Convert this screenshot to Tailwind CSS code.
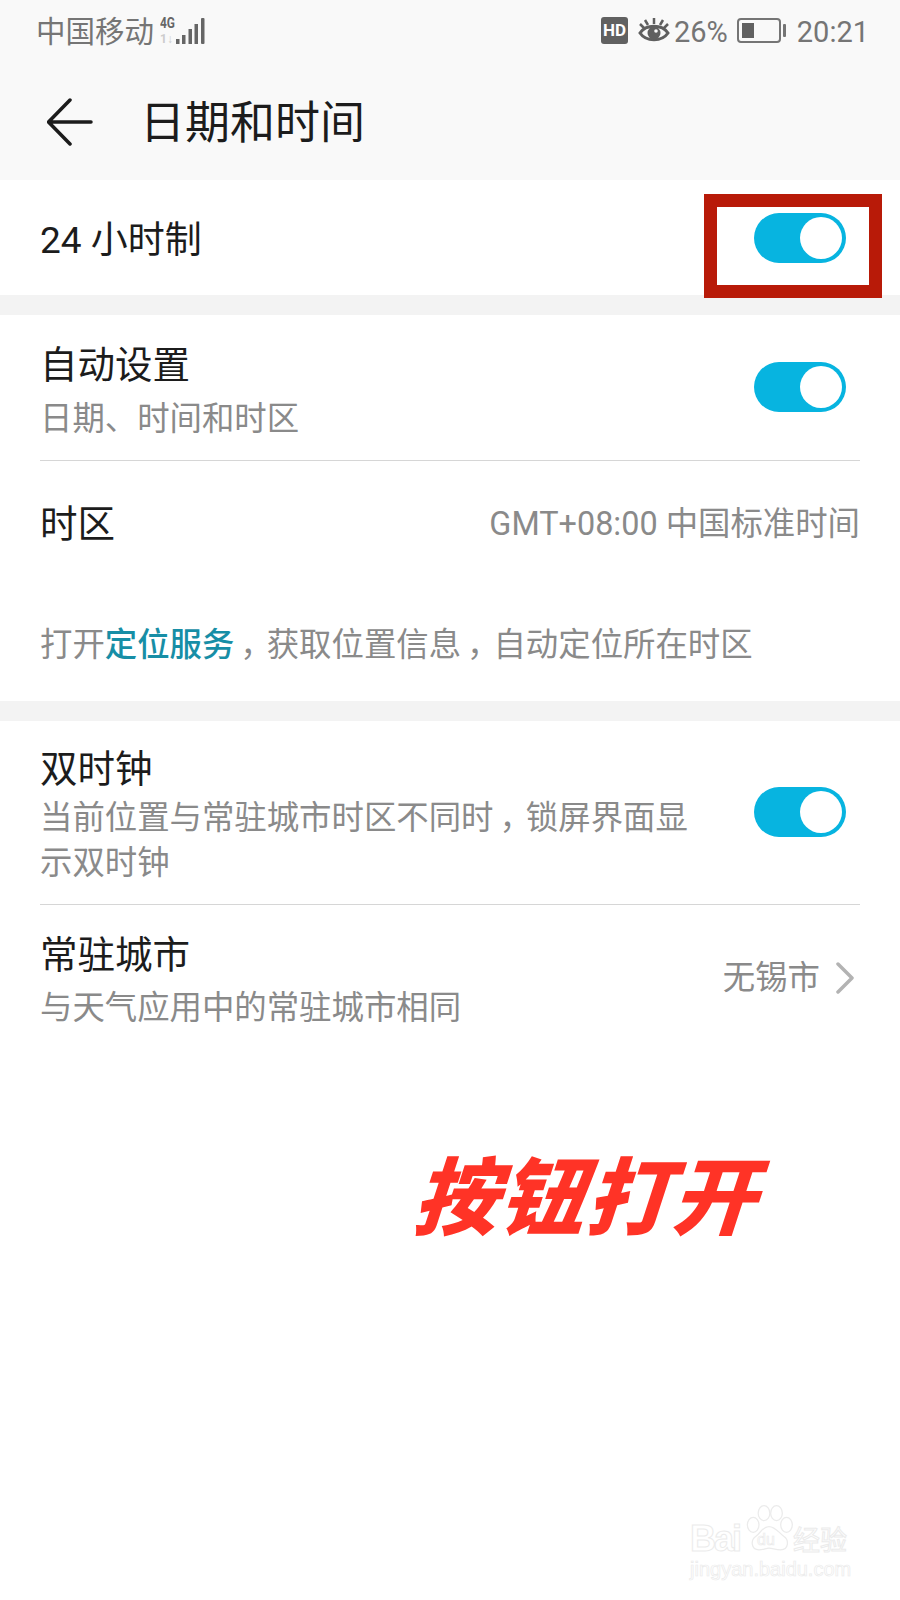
<!doctype html>
<html lang="zh"><head><meta charset="utf-8">
<script src="https://cdn.jsdelivr.net/npm/@tailwindcss/browser@4"></script>
</head>
<body class="m-0">
<div class="relative w-[900px] h-[1600px] bg-white overflow-hidden font-['Roboto','Noto_Sans_CJK_SC',sans-serif] text-[#1c1c1c]">

  <header class="h-[180px] bg-[#f9f9f9]">
    <div class="h-[60px] flex items-center justify-between pl-[36px] pr-[31px] text-[#757575] text-[29px] leading-[40px]">
      <div class="flex items-center">
        <span class="pt-[4px] text-[29.5px]">中国移动</span>
        <svg class="ml-[6px] mt-[2px]" width="46" height="30" viewBox="0 0 46 30">
          <text x="0" y="12" font-size="14" font-weight="700" fill="#666" font-family="Roboto" textLength="15" lengthAdjust="spacingAndGlyphs">4G</text>
          <text x="0" y="27" font-size="12" font-weight="700" fill="#ccc" font-family="Roboto">1↓</text>
          <g fill="#666"><rect x="16" y="23" width="3.5" height="5"/><rect x="22" y="19" width="3.5" height="9"/><rect x="28.500" y="13" width="3.500" height="15"/><rect x="34.500" y="8" width="3.500" height="20"/><rect x="41" y="2" width="3.500" height="26" rx="1"/></g>
        </svg>
      </div>
      <div class="flex items-center">
        <span class="w-[27px] h-[27px] rounded-[3px] bg-[#616161] text-white text-[17px] font-bold leading-[27px] text-center">HD</span>
        <svg class="ml-[10px]" width="32" height="30" viewBox="0 0 32 30" fill="none" stroke="#5f5f5f">
          <path d="M2 18C8 9 24 9 30 18C24 27 8 27 2 18Z" stroke-width="3"/>
          <circle cx="16" cy="18" r="6.500" fill="#5f5f5f" stroke="none"/>
          <circle cx="18" cy="16" r="1.800" fill="#f9f9f9" stroke="none"/>
          <path d="M16 3V9M7 5L10 10M25 5L22 10M2 9L6 13M30 9L26 13" stroke-width="2.500"/>
        </svg>
        <span class="ml-[4px] pt-[4px]">26%</span>
        <div class="ml-[9px] w-[44px] h-[25px] rounded-[4px] border-2 border-[#757575] p-[3px]">
          <div class="w-[12px] h-full bg-[#616161]"></div>
        </div>
        <div class="ml-[2px] w-[3px] h-[13px] rounded-[1px] bg-[#757575]"></div>
        <span class="ml-[11px] pt-[4px]">20:21</span>
      </div>
    </div>
    <div class="h-[120px] flex items-center pl-[47px]">
      <svg class="mt-[4px]" width="46" height="48" viewBox="0 0 46 48" fill="none" stroke="#1c1c1c" stroke-width="3.500" stroke-linecap="round" stroke-linejoin="round">
        <path d="M44 24H2M23 2L1.500 24L23 46"/>
      </svg>
      <h1 class="ml-[47px] pt-[8px] text-[45px] leading-[60px] font-normal">日期和时间</h1>
    </div>
  </header>

  <section class="h-[115px] flex items-center justify-between pl-[40px] pr-[54px]">
    <span class="pt-[7px] text-[37px] leading-[44px]">24 小时制</span>
    <div class="w-[92px] h-[50px] rounded-full bg-[#07b4e0] flex items-center justify-end pr-[4px]"><div class="w-[42px] h-[42px] rounded-full bg-white"></div></div>
  </section>

  <div class="h-[20px] bg-[#f3f3f3]"></div>

  <section class="h-[386px]">
    <div class="mx-[40px] h-[146px] border-b border-[#d6d6d6] flex justify-between">
      <div class="pt-[26px]">
        <div class="text-[37.5px] leading-[48px]">自动设置</div>
        <div class="mt-[8px] text-[32.4px] leading-[44px] text-[#8a8a8a]">日期、时间和时区</div>
      </div>
      <div class="mr-[14px] mt-[47px] w-[92px] h-[50px] rounded-full bg-[#07b4e0] flex items-center justify-end pr-[4px]"><div class="w-[42px] h-[42px] rounded-full bg-white"></div></div>
    </div>
    <div class="mx-[40px] h-[124px] flex justify-between pt-[39px]">
      <span class="text-[37.5px] leading-[48px]">时区</span>
      <span class="text-[32.4px] leading-[48px] text-[#8a8a8a]">GMT+08:00 中国标准时间</span>
    </div>
    <p class="ml-[40px] mt-[38px] text-[32.4px] leading-[44px] text-[#8a8a8a]">打开<span class="font-medium text-[#178ea6]">定位服务</span><span class="ml-[6px] tracking-[-6px]">，</span>获取位置信息<span class="ml-[6px] tracking-[-6px]">，</span>自动定位所在时区</p>
  </section>

  <div class="h-[20px] bg-[#f3f3f3]"></div>

  <section>
    <div class="mx-[40px] h-[184px] border-b border-[#d6d6d6] flex justify-between">
      <div class="pt-[24px] w-[660px]">
        <div class="text-[37.5px] leading-[48px]">双时钟</div>
        <div class="mt-[3px] text-[32.4px] leading-[45px] text-[#8a8a8a]">当前位置与常驻城市时区不同时<span class="ml-[6px] tracking-[-6px]">，</span><span>锁屏界面显</span><br><span>示双时钟</span></div>
      </div>
      <div class="mr-[14px] mt-[66px] w-[92px] h-[50px] rounded-full bg-[#07b4e0] flex items-center justify-end pr-[4px]"><div class="w-[42px] h-[42px] rounded-full bg-white"></div></div>
    </div>
    <div class="mx-[40px] flex justify-between">
      <div class="pt-[26px]">
        <div class="text-[37.5px] leading-[48px]">常驻城市</div>
        <div class="mt-[7px] text-[32.4px] leading-[44px] text-[#8a8a8a]">与天气应用中的常驻城市相同</div>
      </div>
      <div class="flex items-center h-[146px] mr-[6px] text-[32.4px] text-[#8a8a8a]">
        <span class="leading-[44px]">无锡市</span>
        <svg class="ml-[16px]" width="18" height="32" viewBox="0 0 18 32" fill="none" stroke="#b3b3b3" stroke-width="3.500" stroke-linecap="round" stroke-linejoin="round"><path d="M2 2L16 16L2 30"/></svg>
      </div>
    </div>
  </section>

  <!-- annotation overlays -->
  <div class="absolute left-[704px] top-[194px] w-[178px] h-[104px] border-[13px] border-[#b81a08]"></div>
  <div class="absolute left-[421px] top-[1142px] text-[84px] leading-[116px] font-black tracking-[2px] text-[#ff3326] -skew-x-[18deg] whitespace-nowrap">按钮打开</div>

  <!-- watermark -->
  <div class="absolute left-[690px] top-[1500px] w-[170px] h-[90px] text-white [-webkit-text-stroke:1px_#ebebeb]">
    <span class="absolute left-0 top-[17px] text-[36px] leading-[44px] tracking-[-2px] font-bold font-['Liberation_Sans',sans-serif]">Bai</span>
    <svg class="absolute left-[54px] top-[2px]" width="50" height="54" viewBox="0 0 60 58" fill="#fff" stroke="#ebebeb" stroke-width="1.500">
      <ellipse cx="11" cy="24" rx="7" ry="9"/><ellipse cx="24" cy="10" rx="7" ry="9"/><ellipse cx="39" cy="10" rx="7" ry="9"/><ellipse cx="51" cy="24" rx="7" ry="9"/>
      <path d="M30 26C22 26 20 34 14 38C8 42 8 54 18 54C24 54 26 52 30 52C34 52 38 54 44 54C54 54 54 42 48 38C42 34 38 26 30 26Z"/>
    </svg>
    <span class="absolute left-[67px] top-[30px] text-[16px] leading-[20px] font-['Liberation_Sans',sans-serif] [-webkit-text-stroke:0.700px_#ebebeb]">du</span>
    <span class="absolute left-[103px] top-[24px] text-[27px] leading-[34px] whitespace-nowrap">经验</span>
    <span class="absolute left-0 top-[56px] text-[20px] leading-[26px] whitespace-nowrap font-['Liberation_Sans',sans-serif] [-webkit-text-stroke:0.700px_#ebebeb]">jingyan.baidu.com</span>
  </div>
</div>
</body></html>
